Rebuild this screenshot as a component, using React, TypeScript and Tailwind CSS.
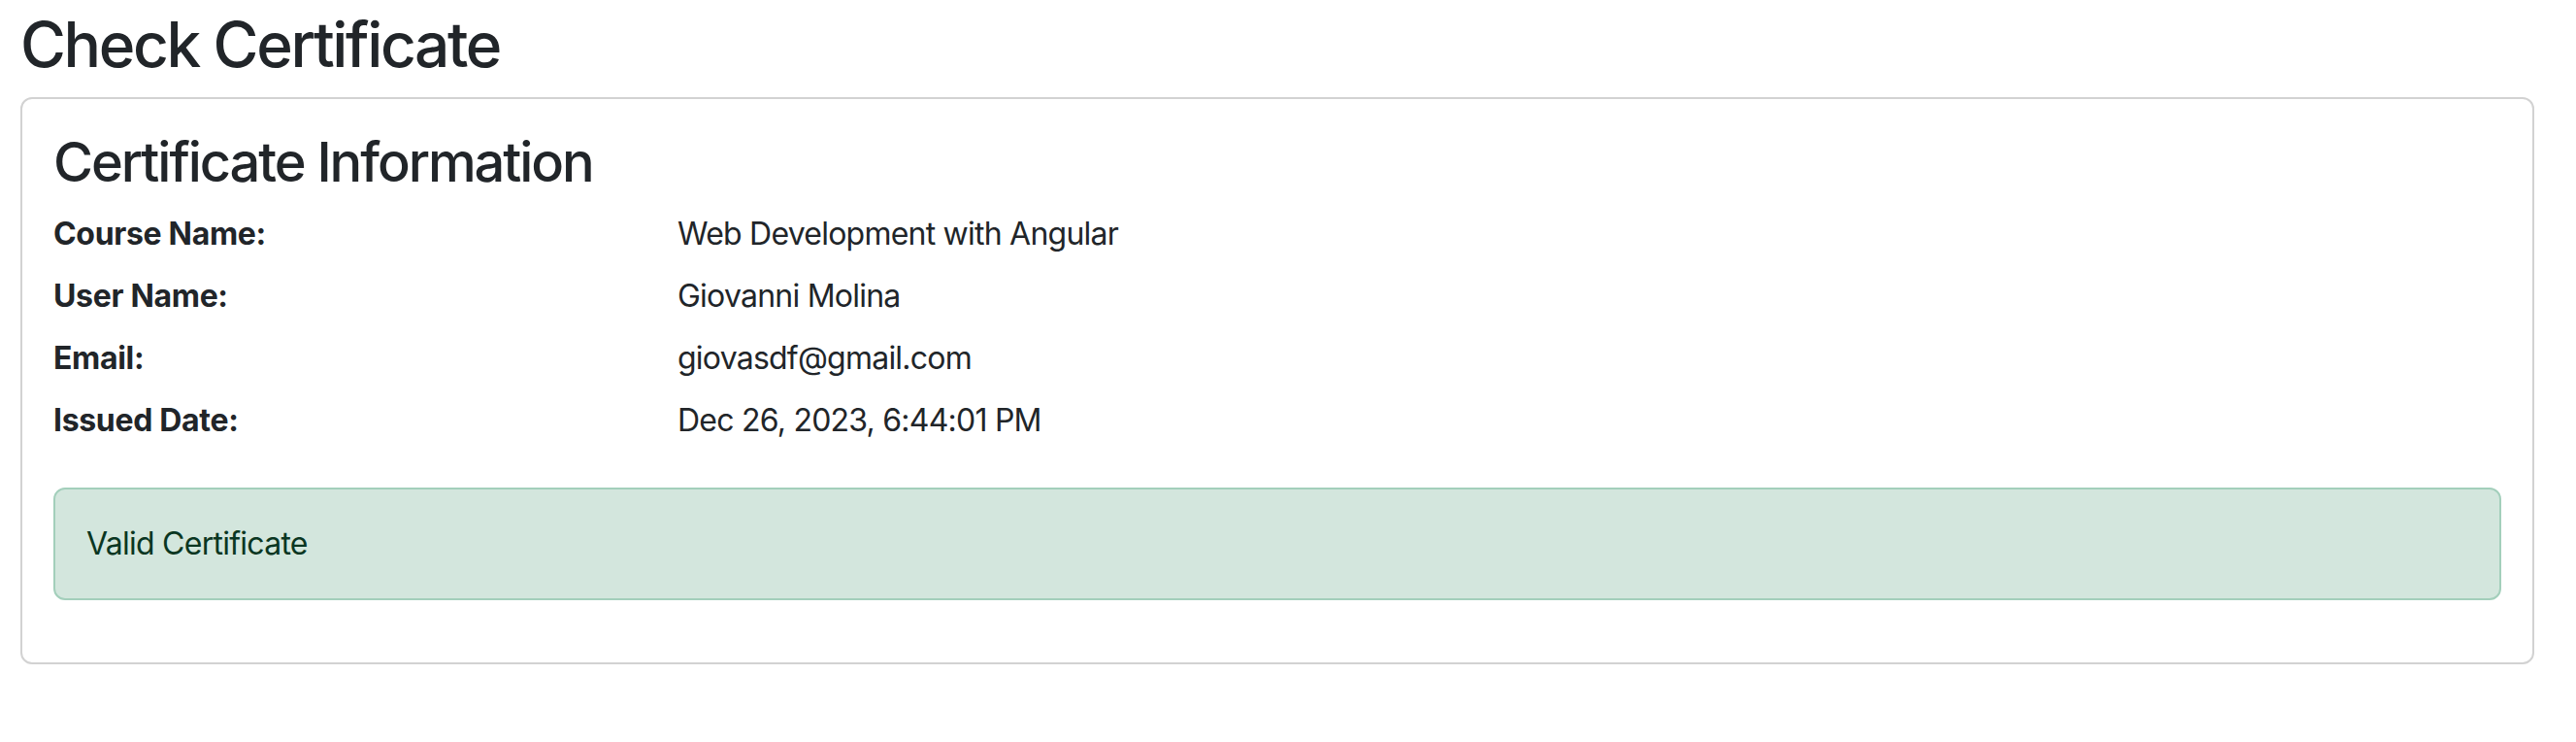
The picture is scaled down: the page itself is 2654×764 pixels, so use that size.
import * as React from 'react';

type Field = { label: string; value: string };

const fields: Field[] = [
  { label: 'Course Name:', value: 'Web Development with Angular' },
  { label: 'User Name:', value: 'Giovanni Molina' },
  { label: 'Email:', value: 'giovasdf@gmail.com' },
  { label: 'Issued Date:', value: 'Dec 26, 2023, 6:44:01 PM' },
];

export default function App() {
  return (
    <div
      className="min-h-screen bg-white text-[#212529] pt-[8px] pl-[21px] pr-[43px]"
      style={{ fontFamily: 'Inter, "Noto Sans", sans-serif' }}
    >
      <h1 className="text-[64px] leading-[1.2] font-medium tracking-[-0.037em] mb-[15px]">Check Certificate</h1>

      {/* Card */}
      <div className="border-2 border-[#d2d2d2] rounded-[12px] bg-white p-[32px] pb-[32px]">
        <h3 className="text-[56px] leading-[1.2] font-medium tracking-[-0.037em] mb-[16px]">Certificate Information</h3>

        <div className="flex flex-col">
          {fields.map((f) => (
            <div key={f.label} className="grid grid-cols-[643px_1fr] text-[32px] leading-[48px] mb-[16px]">
              <div className="font-bold tracking-[-0.01em]">{f.label}</div>
              <div className="tracking-[-0.024em]">{f.value}</div>
            </div>
          ))}
        </div>

        <div className="mt-[29px] border-2 border-[#a3cfbb] bg-[#d3e6dd] text-[#0a3622] rounded-[12px] px-[32px] py-[32px] text-[32px] leading-[48px] tracking-[-0.023em] mb-[32px]">
          Valid Certificate
        </div>
      </div>
    </div>
  );
}
